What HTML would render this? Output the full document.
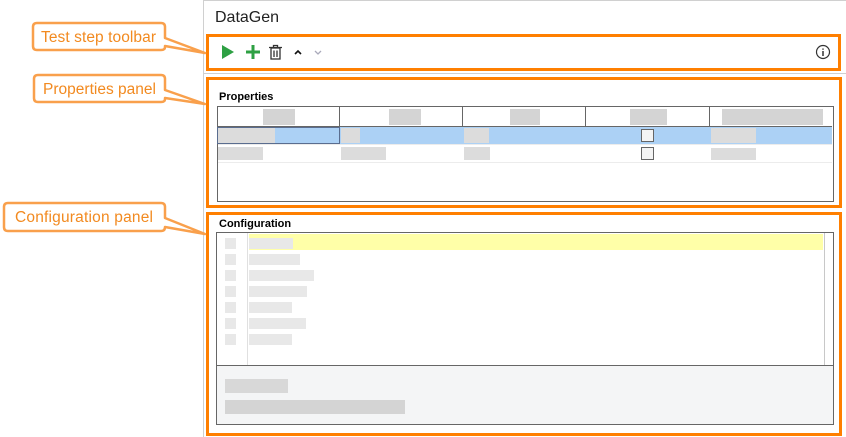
<!DOCTYPE html>
<html><head><meta charset="utf-8"><style>
body{margin:0;width:846px;height:437px;position:relative;background:#fff;font-family:"Liberation Sans",sans-serif;overflow:hidden}
.a{position:absolute}
.g{position:absolute;background:#dcdcdc}
.ob{position:absolute;border:3px solid #ff7f00;box-sizing:border-box}
.lbl{position:absolute;font-weight:bold;font-size:11px;color:#000}
</style></head><body>
<div class="a" style="left:203px;top:0;width:643px;height:1px;background:#d0d0d0"></div>
<div class="a" style="left:203px;top:0;width:1px;height:437px;background:#d0d0d0"></div>
<div class="a" style="left:215px;top:9px;font-size:16px;color:#222">DataGen</div>
<div class="a" style="left:203px;top:73px;width:643px;height:1px;background:#d0d0d0"></div>

<div class="ob" style="left:206px;top:34px;width:635px;height:37px"></div>
<svg class="a" style="left:218px;top:42px" width="110" height="20">
<polygon points="4,3 16,10 4,17" fill="#2ea043"/>
<path d="M35 3V17M28 10H42" stroke="#2ea043" stroke-width="3"/>
<g fill="none" stroke="#333" stroke-width="1.3"><rect x="53" y="6" width="9" height="11"/><path d="M51 5.5H64M55.5 5.5V3.5H59.5V5.5M56 8.5V15M59 8.5V15"/></g>
<path d="M77 12L80 9L83 12" stroke="#111" stroke-width="1.6" fill="none"/>
<path d="M97 9L100 12L103 9" stroke="#aab" stroke-width="1.3" fill="none"/>
</svg>
<svg class="a" style="left:815px;top:44px" width="16" height="16"><circle cx="8" cy="8" r="6.5" fill="none" stroke="#333" stroke-width="1.2"/><path d="M8 7V12M8 4.5V5.7" stroke="#333" stroke-width="1.5"/></svg>

<div class="ob" style="left:206px;top:77px;width:636px;height:131px"></div>
<div class="lbl" style="left:219px;top:91px">Properties</div>
<div class="a" style="left:217px;top:106px;width:615px;height:94px;border:1px solid #666"></div>
<div class="a" style="left:218px;top:126px;width:614px;height:1px;background:#666"></div>
<div class="a" style="left:339px;top:107px;width:1px;height:19px;background:#666"></div>
<div class="a" style="left:462px;top:107px;width:1px;height:19px;background:#666"></div>
<div class="a" style="left:585px;top:107px;width:1px;height:19px;background:#666"></div>
<div class="a" style="left:709px;top:107px;width:1px;height:19px;background:#666"></div>
<div class="g" style="left:263px;top:109px;width:32px;height:16px;background:#d4d4d4"></div>
<div class="g" style="left:389px;top:109px;width:32px;height:16px;background:#d4d4d4"></div>
<div class="g" style="left:510px;top:109px;width:30px;height:16px;background:#d4d4d4"></div>
<div class="g" style="left:630px;top:109px;width:37px;height:16px;background:#d4d4d4"></div>
<div class="g" style="left:722px;top:109px;width:101px;height:16px;background:#d4d4d4"></div>
<div class="a" style="left:218px;top:127px;width:614px;height:17px;background:#acd1f5"></div>
<div class="a" style="left:217px;top:127px;width:121px;height:15px;border:1px solid #5a6d8f"></div>
<div class="g" style="left:218px;top:128px;width:57px;height:15px"></div>
<div class="g" style="left:341px;top:128px;width:19px;height:15px"></div>
<div class="g" style="left:464px;top:128px;width:25px;height:15px"></div>
<div class="g" style="left:711px;top:128px;width:45px;height:15px"></div>
<div class="a" style="left:218px;top:144px;width:614px;height:1px;background:#ececec"></div>
<div class="a" style="left:218px;top:162px;width:614px;height:1px;background:#ececec"></div>
<div class="g" style="left:218px;top:147px;width:45px;height:13px"></div>
<div class="g" style="left:341px;top:147px;width:45px;height:13px"></div>
<div class="g" style="left:464px;top:147px;width:26px;height:13px"></div>
<div class="g" style="left:711px;top:148px;width:45px;height:12px"></div>
<div class="a" style="left:641px;top:129px;width:11px;height:11px;border:1px solid #666;background:#f4f4f4"></div>
<div class="a" style="left:641px;top:147px;width:11px;height:11px;border:1px solid #666;background:#f4f4f4"></div>

<div class="ob" style="left:206px;top:212px;width:636px;height:224px"></div>
<div class="lbl" style="left:219px;top:218px">Configuration</div>
<div class="a" style="left:216px;top:232px;width:616px;height:191px;border:1px solid #666;background:#f4f5f6"></div>
<div class="a" style="left:217px;top:233px;width:616px;height:132px;background:#fff;border-bottom:1px solid #666"></div>
<div class="a" style="left:824px;top:233px;width:1px;height:132px;background:#c8c8c8"></div>
<div class="a" style="left:247px;top:233px;width:1px;height:132px;background:#e0e0e0"></div>
<div class="a" style="left:249px;top:234px;width:574px;height:16px;background:#ffffa8"></div>
<div class="g" style="left:249px;top:238px;width:44px;height:11px;background:#e8e8e8"></div>
<div class="g" style="left:249px;top:254px;width:51px;height:11px;background:#e8e8e8"></div>
<div class="g" style="left:249px;top:270px;width:65px;height:11px;background:#e8e8e8"></div>
<div class="g" style="left:249px;top:286px;width:58px;height:11px;background:#e8e8e8"></div>
<div class="g" style="left:249px;top:302px;width:43px;height:11px;background:#e8e8e8"></div>
<div class="g" style="left:249px;top:318px;width:57px;height:11px;background:#e8e8e8"></div>
<div class="g" style="left:249px;top:334px;width:43px;height:11px;background:#e8e8e8"></div>
<div class="g" style="left:225px;top:238px;width:11px;height:11px;background:#e8e8e8"></div>
<div class="g" style="left:225px;top:254px;width:11px;height:11px;background:#e8e8e8"></div>
<div class="g" style="left:225px;top:270px;width:11px;height:11px;background:#e8e8e8"></div>
<div class="g" style="left:225px;top:286px;width:11px;height:11px;background:#e8e8e8"></div>
<div class="g" style="left:225px;top:302px;width:11px;height:11px;background:#e8e8e8"></div>
<div class="g" style="left:225px;top:318px;width:11px;height:11px;background:#e8e8e8"></div>
<div class="g" style="left:225px;top:334px;width:11px;height:11px;background:#e8e8e8"></div>
<div class="g" style="left:225px;top:379px;width:63px;height:14px;background:#d8d8d8"></div>
<div class="g" style="left:225px;top:400px;width:180px;height:14px;background:#d4d4d4"></div>

<svg class="a" style="left:0;top:0" width="210" height="437">
<g fill="#fff" stroke="#f9a04c" stroke-width="2.5" stroke-linejoin="round">
<path d="M37 23H161Q165 23 165 27V38L205 53L165 46V47Q165 50 161 50H37Q33 50 33 46V27Q33 23 37 23Z"/>
<path d="M38 75H161Q165 75 165 79V90L205 104L165 98V99Q165 102 161 102H38Q34 102 34 98V79Q34 75 38 75Z"/>
<path d="M8 203H161Q165 203 165 207V218L205 234L165 227V227Q165 231 161 231H8Q4 231 4 227V207Q4 203 8 203Z"/>
</g>
<g fill="#f28a20" font-family="Liberation Sans, sans-serif" font-size="15.5">
<text x="41" y="42" textLength="115">Test step toolbar</text>
<text x="43" y="94" textLength="113">Properties panel</text>
<text x="15" y="222" textLength="138">Configuration panel</text>
</g>
</svg>
</body></html>
